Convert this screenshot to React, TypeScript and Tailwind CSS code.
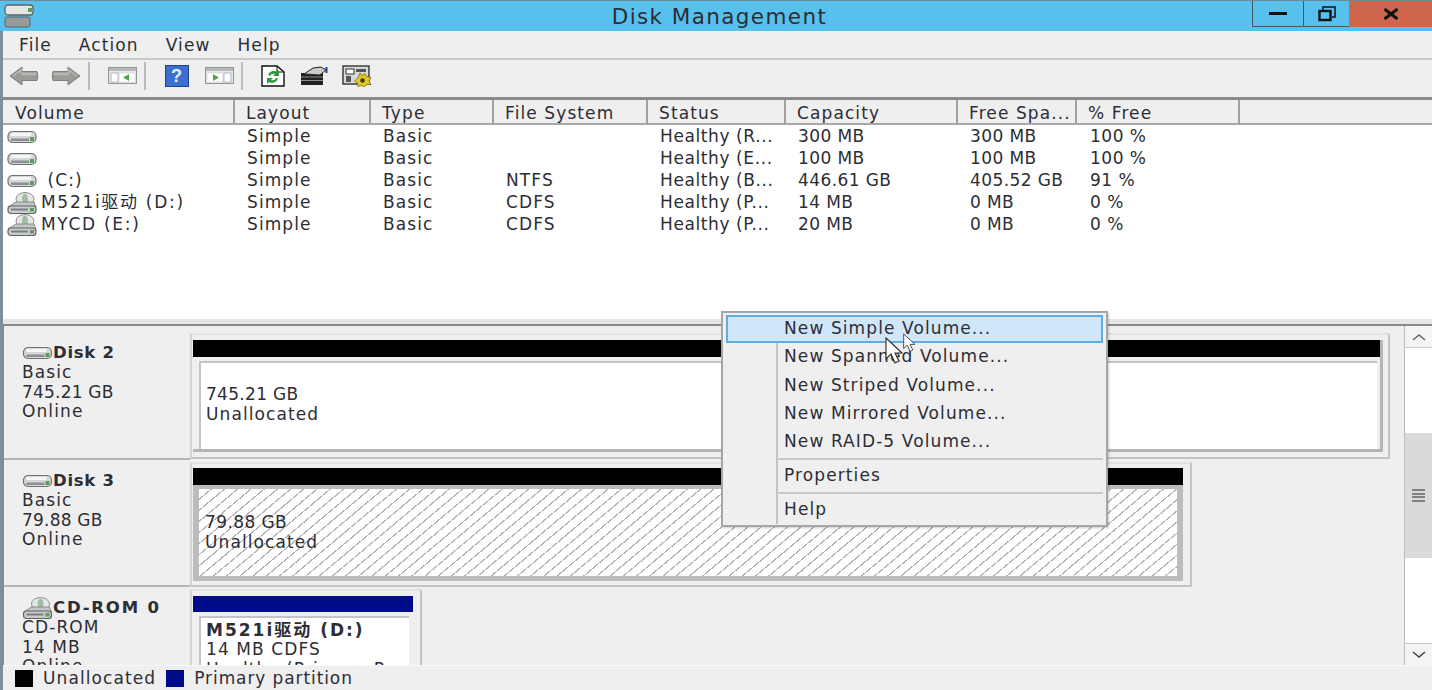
import React from "react";

const columns = [
  { label: "Volume", width: "w-[231px]" },
  { label: "Layout", width: "w-[136px]" },
  { label: "Type", width: "w-[123px]" },
  { label: "File System", width: "w-[154px]" },
  { label: "Status", width: "w-[138px]" },
  { label: "Capacity", width: "w-[172px]" },
  { label: "Free Spa...", width: "w-[119px]" },
  { label: "% Free", width: "w-[163px]" },
];

const volumes = [
  { icon: "hdd", name: "", layout: "Simple", type: "Basic", fs: "", status: "Healthy (R...", cap: "300 MB", free: "300 MB", pct: "100 %" },
  { icon: "hdd", name: "", layout: "Simple", type: "Basic", fs: "", status: "Healthy (E...", cap: "100 MB", free: "100 MB", pct: "100 %" },
  { icon: "hdd", name: " (C:)", layout: "Simple", type: "Basic", fs: "NTFS", status: "Healthy (B...", cap: "446.61 GB", free: "405.52 GB", pct: "91 %" },
  { icon: "cd", name: "M521i驱动 (D:)", layout: "Simple", type: "Basic", fs: "CDFS", status: "Healthy (P...", cap: "14 MB", free: "0 MB", pct: "0 %" },
  { icon: "cd", name: "MYCD (E:)", layout: "Simple", type: "Basic", fs: "CDFS", status: "Healthy (P...", cap: "20 MB", free: "0 MB", pct: "0 %" },
];

const HddIcon = ({ className }: { className?: string }) => (
  <svg viewBox="0 0 30 14" className={className}>
    <rect x="1" y="1.5" width="28" height="11" rx="4.5" fill="#d4d7d7" stroke="#6f7272" strokeWidth="1.2" />
    <rect x="4" y="3" width="20" height="3" fill="#f6f6f6" />
    <rect x="4" y="8.5" width="18" height="2.5" fill="#8d9090" />
    <rect x="23" y="7" width="4" height="4" fill="#5f9a5a" />
  </svg>
);

const CdIcon = ({ className }: { className?: string }) => (
  <svg viewBox="0 0 30 22" className={className}>
    <ellipse cx="18" cy="7" rx="9" ry="6.5" fill="#e4e7e7" stroke="#8b8f8f" />
    <ellipse cx="18" cy="7" rx="3" ry="5.5" fill="#9dbf9f" />
    <path d="M1 15 L9 10 H27 L29 15 Z" fill="#c4c7c7" stroke="#777" strokeWidth="0.8" />
    <rect x="1" y="14" width="28" height="7.5" rx="3" fill="#c9cccc" stroke="#5f6262" strokeWidth="1.2" />
    <rect x="4" y="16.5" width="17" height="2" fill="#7d8080" />
    <rect x="23" y="16" width="4" height="3.5" fill="#5f9a5a" />
  </svg>
);

const ArrowIcon = ({ flip }: { flip?: boolean }) => (
  <svg viewBox="0 0 30 20" className={`h-[20px] w-[30px] ${flip ? "-scale-x-100" : ""}`}>
    <path d="M1 10 L13 1 V5.5 H28 Q29.5 10 28 14.5 H13 V19 Z" fill="#9b9b98" stroke="#7f7f7c" />
    <path d="M13 8 H27" stroke="#b8b8b5" strokeWidth="2.5" />
    <path d="M4 10 L12 4 V8" fill="none" stroke="#b8b8b5" strokeWidth="1.5" />
  </svg>
);

const PaneIcon = ({ side }: { side: "left" | "right" }) => (
  <svg viewBox="0 0 30 18" className="h-[18px] w-[30px]">
    <rect x="0.5" y="0.5" width="28" height="16" fill="#e8eaea" stroke="#8f9494" />
    <rect x="1" y="1" width="27" height="3" fill="#b4b9b9" />
    {side === "left" ? (
      <>
        <rect x="3" y="6" width="7" height="9" fill="#fff" stroke="#8ea0b8" strokeWidth="0.7" />
        <rect x="11" y="6" width="16" height="9" fill="#fff" stroke="#c0c4c4" strokeWidth="0.5" />
        <path d="M21 7 L15 10.5 L21 14 Z" fill="#4fa64a" />
      </>
    ) : (
      <>
        <rect x="2" y="6" width="16" height="9" fill="#fff" stroke="#c0c4c4" strokeWidth="0.5" />
        <rect x="19" y="6" width="7" height="9" fill="#fff" stroke="#8ea0b8" strokeWidth="0.7" />
        <path d="M8 7 L14 10.5 L8 14 Z" fill="#4fa64a" />
      </>
    )}
  </svg>
);

const HelpIcon = () => (
  <svg viewBox="0 0 24 22" className="h-[22px] w-[24px]">
    <rect x="0.5" y="0.5" width="23" height="21" fill="#3c6fd0" stroke="#23408f" />
    <text x="12" y="17" textAnchor="middle" fontSize="18" fontWeight="700" fill="#e8edf8" fontFamily="Liberation Sans">?</text>
  </svg>
);

const RefreshIcon = () => (
  <svg viewBox="0 0 24 22" className="h-[22px] w-[24px]">
    <path d="M1 1 H16 L23 7 V21 H1 Z" fill="#fff" stroke="#111" strokeWidth="1.4" />
    <path d="M16 1 V7 H23" fill="none" stroke="#111" />
    <path d="M7 10 A6 6 0 0 1 16 7 L18 5 V11 H12 L14 9 A4 4 0 0 0 9 11 Z" fill="#2f9a3b" />
    <path d="M17 13 A6 6 0 0 1 8 17 L6 19 V13 H12 L10 15 A4 4 0 0 0 15 13 Z" fill="#2f9a3b" />
  </svg>
);

const PropsIcon = () => (
  <svg viewBox="0 0 28 20" className="h-[20px] w-[28px]">
    <path d="M1 7 H23 V19 H1 Z" fill="#222" />
    <path d="M1 11 H23 M1 14.5 H23" stroke="#8a8a8a" strokeWidth="1" />
    <path d="M4 8 L13 2 L21 1 L26 4 L20 9 Z" fill="#c9c9c9" stroke="#222" />
    <path d="M26.5 1 V7" stroke="#2a3aa0" strokeWidth="2" />
  </svg>
);

const SettingsIcon = () => (
  <svg viewBox="0 0 30 22" className="h-[22px] w-[30px]">
    <rect x="1" y="1" width="26" height="18" fill="#d9d9d9" stroke="#333" strokeWidth="1.4" />
    <rect x="4" y="4" width="8" height="5" fill="#fff" stroke="#333" />
    <rect x="14" y="4" width="10" height="3" fill="#555" />
    <rect x="4" y="11" width="5" height="6" fill="#555" />
    <path d="M18 8 L20 10.5 L23 8.5 L24.5 11.5 L29 12.5 L27 16 L29 19.5 L25 19.5 L22 22 L20 20.5 L16 21.5 L15.5 18 L12.5 16 L15.5 13.5 Z" fill="#e0c81e" stroke="#6d5f10" strokeWidth="0.7" />
    <circle cx="20.5" cy="15.5" r="2.2" fill="#333" />
  </svg>
);

const ToolbarSep = () => <div className="h-[28px] w-[2px] bg-[#bcbcbc]" />;

const CursorArrow = ({ className }: { className?: string }) => (
  <svg viewBox="0 0 20 28" className={className}>
    <path d="M1 1 V22 L6 17 L10 26 L14 24 L10 16 L17 16 Z" fill="#fff" stroke="#333" strokeWidth="1.2" />
  </svg>
);

const DiskLabel = ({ icon, name, lines, height, offset }: { icon: "hdd" | "cd"; name: string; lines: string[]; height: string; offset?: boolean }) => (
  <div className={`${height} ${offset ? "pt-[7px]" : "pt-[1px]"} w-[186px] shrink-0 border-b-2 border-[#b4b4b4] pl-[18px]`}>
    <div className="flex h-[30px] items-end">
      {icon === "hdd" ? <HddIcon className="mb-[3px] h-[14px] w-[31px]" /> : <CdIcon className="mb-[-1px] h-[22px] w-[31px]" />}
      <span className={`text-[16.5px] leading-[20px] font-bold ${icon === "cd" ? "tracking-[1.8px]" : "tracking-[0.7px]"}`}>{name}</span>
    </div>
    {lines.map((line) => (
      <div key={line} className={`leading-[19.5px] ${line.includes("GB") ? "tracking-[0.2px]" : ""}`}>
        {line}
      </div>
    ))}
  </div>
);

const MenuItem = ({ children }: { children: string }) => (
  <div className="ml-[50px] flex h-[28.3px] items-center border-l-2 border-[#c4c4c4] pl-[6px]">{children}</div>
);

const App = () => {
  return (
    <div className="flex h-[690px] w-[1432px] flex-col overflow-hidden bg-[#efefef] font-['DejaVu_Sans','Noto_Sans_CJK_SC',sans-serif] text-[17px] tracking-[1.1px] text-[#2d2d35]">
      {/* title bar */}
      <div className="flex h-[31px] shrink-0 items-start border-t border-[#6f8a99] bg-[#56c1ec]">
        <div className="flex h-[29px] w-[40px] items-center pl-[4px]">
          <svg viewBox="0 0 30 24" className="h-[24px] w-[30px]">
            <rect x="1" y="1" width="28" height="10" rx="3" fill="#e4e6e6" stroke="#5f6262" strokeWidth="1.3" />
            <rect x="24" y="4" width="4" height="4" fill="#5f9a5a" />
            <rect x="1" y="13" width="25" height="10" rx="2" fill="#989b9b" stroke="#5f6262" />
          </svg>
        </div>
        <div className="flex h-[29px] flex-1 items-center justify-center pt-[4px] pl-[147px] text-[21.5px] tracking-[1.4px]">Disk Management</div>
        <div className="flex h-[26px]">
          <div className="flex w-[51px] items-center justify-center border-b border-l border-[#3f5b6b]">
            <div className="h-[3px] w-[18px] bg-[#111]" />
          </div>
          <div className="flex w-[46px] items-center justify-center border-b border-l border-[#3f5b6b]">
            <svg viewBox="0 0 18 16" className="h-[16px] w-[18px]">
              <path d="M5 4 V1 H17 V11 H14" fill="none" stroke="#111" strokeWidth="1.5" />
              <rect x="1.5" y="5" width="11" height="9" fill="none" stroke="#111" strokeWidth="2.4" />
            </svg>
          </div>
          <div className="flex w-[83px] items-center justify-center bg-[#cf654b]">
            <svg viewBox="0 0 16 12" className="h-[12px] w-[16px]">
              <path d="M1.5 1 L14.5 11 M14.5 1 L1.5 11" stroke="#111" strokeWidth="3" />
            </svg>
          </div>
        </div>
      </div>

      <div className="flex min-h-0 flex-1 flex-col border-l-[3px] border-[#7d8f9a]">
        {/* menu */}
        <div className="flex h-[29px] shrink-0 items-center gap-[27px] border-b-2 border-[#c8c8c8] pt-[2px] pl-[16px]">
          <span>File</span>
          <span>Action</span>
          <span>View</span>
          <span>Help</span>
        </div>

        {/* toolbar */}
        <div className="flex h-[40px] shrink-0 items-center border-b-[3px] border-[#8a8a8a] pb-[5px] pl-[6px]">
          <ArrowIcon />
          <div className="ml-[12px]"><ArrowIcon flip /></div>
          <div className="ml-[7px]"><ToolbarSep /></div>
          <div className="ml-[18px]"><PaneIcon side="left" /></div>
          <div className="ml-[6px]"><ToolbarSep /></div>
          <div className="ml-[19px]"><HelpIcon /></div>
          <div className="ml-[16px]"><PaneIcon side="right" /></div>
          <div className="ml-[6px]"><ToolbarSep /></div>
          <div className="ml-[18px]"><RefreshIcon /></div>
          <div className="ml-[15px]"><PropsIcon /></div>
          <div className="ml-[14px]"><SettingsIcon /></div>
        </div>

        {/* volume list */}
        <div className="flex h-[25px] shrink-0 border-b-2 border-[#a8a8a8] pl-[1px]">
          {columns.map((col) => (
            <div key={col.label} className={`${col.width} flex items-center border-r-2 border-[#a0a0a0] pt-[4px] pl-[11px] whitespace-nowrap`}>
              {col.label}
            </div>
          ))}
        </div>
        <div className="h-[194px] shrink-0 bg-white pt-[1px] pl-[1px]">
          {volumes.map((v) => (
            <div key={v.cap + v.name} className="flex h-[22px] items-center">
              <div className="flex w-[231px] items-center pl-[3px]">
                {v.icon === "hdd" ? <HddIcon className="h-[14px] w-[30px]" /> : <CdIcon className="h-[22px] w-[30px]" />}
                <span className={`whitespace-pre pl-[4px] ${v.icon === "cd" ? "tracking-[1.7px]" : ""}`}>{v.name}</span>
              </div>
              <div className="w-[136px] pl-[12px]">{v.layout}</div>
              <div className="w-[123px] pl-[12px]">{v.type}</div>
              <div className="w-[154px] pl-[12px]">{v.fs}</div>
              <div className="w-[138px] pl-[12px] whitespace-nowrap tracking-[0.6px]">{v.status}</div>
              <div className="w-[172px] pl-[12px] tracking-[0.4px]">{v.cap}</div>
              <div className="w-[119px] pl-[12px] whitespace-nowrap tracking-[0.4px]">{v.free}</div>
              <div className="w-[163px] pl-[13px] tracking-[0.5px]">{v.pct}</div>
            </div>
          ))}
        </div>
        <div className="h-[7px] shrink-0 border-b-[2px] border-[#8a8a8a] bg-[#e6e6e6]" />

        {/* disk map */}
        <div className="flex min-h-0 flex-1">
          <div className="min-w-0 flex-1 overflow-hidden border-l border-[#888]">
            <div className="flex">
              <DiskLabel icon="hdd" name="Disk 2" lines={["Basic", "745.21 GB", "Online"]} height="h-[134px]" offset />
              <div className="mt-[7px] flex h-[126px] w-[1200px] flex-col border-2 border-t-[#e2e2e2] border-r-[#c4c4c4] border-b-[#c4c4c4] border-l-[#d4d4d4] pt-[5px] pl-[1px]">
                <div className="w-[1190px] border-r-[3px] border-b-[3px] border-[#b4b4b4]">
                  <div className="h-[17px] w-[1187px] bg-black" />
                  <div className="mt-[4px] ml-[6px] flex h-[88px] w-[1178px] flex-col justify-center border-t-2 border-l-2 border-[#c4c4c4] bg-white pb-[4px] pl-[5px] leading-[20px]">
                    <div className="tracking-[0.3px]">745.21 GB</div>
                    <div>Unallocated</div>
                  </div>
                </div>
              </div>
            </div>
            <div className="flex">
              <DiskLabel icon="hdd" name="Disk 3" lines={["Basic", "79.88 GB", "Online"]} height="h-[127px]" />
              <div className="mt-[2px] flex h-[125px] w-[1002px] flex-col border-2 border-t-[#e2e2e2] border-r-[#c4c4c4] border-b-[#c4c4c4] border-l-[#d4d4d4] pt-[4px] pl-[1px]">
                <div className="h-[17px] w-[990px] bg-black" />
                <div className="w-[990px] border-[6px] border-t-[4px] border-b-[5px] border-[#bcbcbc]">
                  <div className="flex h-[87px] flex-col justify-center bg-white bg-[repeating-linear-gradient(140deg,#ffffff_0px,#ffffff_7.3px,#b4b4b4_7.3px,#b4b4b4_8.5px)] pb-[2px] pl-[6px] leading-[20px]">
                    <div className="tracking-[0.4px]">79.88 GB</div>
                    <div>Unallocated</div>
                  </div>
                </div>
              </div>
            </div>
            <div className="flex">
              <DiskLabel icon="cd" name="CD-ROM 0" lines={["CD-ROM", "14 MB", "Online"]} height="h-[110px]" />
              <div className="mt-[2px] flex h-[110px] w-[232px] flex-col border-2 border-b-0 border-t-[#e2e2e2] border-r-[#c4c4c4] border-l-[#d4d4d4] pt-[5px] pl-[1px]">
                <div className="h-[17px] w-[220px] bg-[#000b8a]" />
                <div className="mt-[4px] ml-[6px] h-[90px] w-[210px] overflow-hidden border-t-2 border-l-2 border-[#c4c4c4] bg-white pt-[3px] pl-[5px] leading-[19.5px]">
                  <div className="font-bold tracking-[2px] whitespace-nowrap">M521i驱动 (D:)</div>
                  <div>14 MB CDFS</div>
                  <div className="whitespace-nowrap">Healthy (Primary P</div>
                </div>
              </div>
            </div>
          </div>

          {/* scrollbar */}
          <div className="flex w-[28px] shrink-0 flex-col border-l border-[#bdbdbd] bg-white">
            <div className="flex h-[22px] items-center justify-center border-b border-[#c8c8c8] bg-[#f4f4f4]">
              <svg viewBox="0 0 14 8" className="h-[8px] w-[14px]">
                <path d="M1 7 L7 2 L13 7" fill="none" stroke="#666" strokeWidth="1.5" />
              </svg>
            </div>
            <div className="mt-[85px] flex h-[125px] items-center justify-center bg-[#dadada]">
              <div className="flex w-[13px] flex-col gap-[1.5px]">
                <div className="h-[2px] bg-[#808080]" />
                <div className="h-[2px] bg-[#808080]" />
                <div className="h-[2px] bg-[#808080]" />
                <div className="h-[2px] bg-[#808080]" />
              </div>
            </div>
            <div className="flex-1" />
            <div className="flex h-[22px] items-center justify-center border-t border-[#c8c8c8] bg-[#f4f4f4]">
              <svg viewBox="0 0 14 8" className="h-[8px] w-[14px]">
                <path d="M1 1 L7 6 L13 1" fill="none" stroke="#444" strokeWidth="1.5" />
              </svg>
            </div>
          </div>
        </div>

        {/* legend */}
        <div className="relative flex h-[25px] shrink-0 items-center border-t border-[#f8f8f8] bg-[#efefef] pt-[1px] pl-[12px]">
          <div className="h-[17px] w-[18px] bg-black" />
          <span className="ml-[10px]">Unallocated</span>
          <div className="ml-[10px] h-[17px] w-[18px] bg-[#000b8a]" />
          <span className="ml-[10px] tracking-[0.9px]">Primary partition</span>
        </div>
      </div>

      {/* context menu */}
      <div className="absolute top-[311px] left-[721px] h-[216px] w-[387px] border-2 border-[#a6a6a6] bg-[#efefef] pt-[2px] pr-[3px] pl-[3px] shadow-[1px_1px_2px_rgba(0,0,0,0.2)]">
        <div className="flex h-[28px] items-center border-2 border-[#5daee3] bg-[#cfe6fb] pl-[56px]">New Simple Volume...</div>
        <MenuItem>New Spanned Volume...</MenuItem>
        <MenuItem>New Striped Volume...</MenuItem>
        <MenuItem>New Mirrored Volume...</MenuItem>
        <MenuItem>New RAID-5 Volume...</MenuItem>
        <div className="ml-[50px] flex h-[6px] items-center border-l-2 border-[#c4c4c4]">
          <div className="h-[2px] flex-1 bg-[#c8c8c8]" />
        </div>
        <div className="ml-[50px] flex h-[28px] items-center border-l-2 border-[#c4c4c4] pl-[6px]">Properties</div>
        <div className="ml-[50px] flex h-[6px] items-center border-l-2 border-[#c4c4c4]">
          <div className="h-[2px] flex-1 bg-[#c8c8c8]" />
        </div>
        <div className="ml-[50px] flex h-[28px] items-center border-l-2 border-[#c4c4c4] pl-[6px]">Help</div>
        <CursorArrow className="absolute top-[24px] left-[160px] h-[28px] w-[24px]" />
        <CursorArrow className="absolute top-[19px] left-[180px] h-[22px] w-[14px]" />
      </div>
    </div>
  );
};

export default App;
